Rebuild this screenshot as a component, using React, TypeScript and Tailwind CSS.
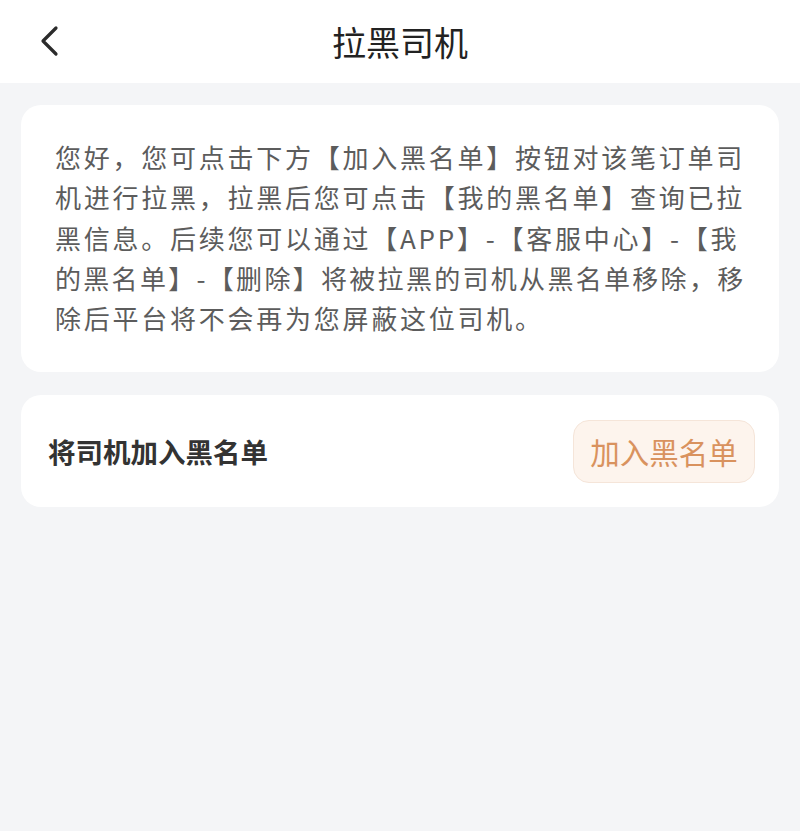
import React from "react";

const lines = [
  "您好，您可点击下方【加入黑名单】按钮对该笔订单司",
  "机进行拉黑，拉黑后您可点击【我的黑名单】查询已拉",
  "黑信息。后续您可以通过【APP】-【客服中心】-【我",
  "的黑名单】-【删除】将被拉黑的司机从黑名单移除，移",
  "除后平台将不会再为您屏蔽这位司机。",
];

export default function App() {
  return (
    <div
      className="min-h-[831px] w-[800px] bg-[#f4f5f7]"
      style={{ fontFamily: '"Noto Sans CJK SC", "Noto Sans", sans-serif' }}
    >
      <div className="relative flex h-[83px] items-center justify-center bg-white">
        <svg
          className="absolute left-[36px] top-[24px]"
          width="26"
          height="34"
          viewBox="0 0 26 34"
          fill="none"
        >
          <path
            d="M20 4 L7 17 L20 30"
            stroke="#2b2b2b"
            strokeWidth="3.2"
            strokeLinecap="round"
            strokeLinejoin="round"
          />
        </svg>
        <span className="text-[34px] leading-none text-[#222]">拉黑司机</span>
      </div>

      <div className="px-[21px] pt-[22px]">
        <div className="rounded-[20px] bg-white pb-[34px] pl-[34px] pr-[20px] pt-[32px] text-[26px] leading-[40.3px] tracking-[2.75px] text-[#5c5c5c]">
          {lines.map((l, i) => (
            <div key={i} className={i === 3 ? "whitespace-nowrap tracking-[2.3px]" : "whitespace-nowrap"}>
              {l}
            </div>
          ))}
        </div>

        <div className="mt-[23px] flex h-[112px] items-center justify-between rounded-[20px] bg-white pl-[27px] pr-[24px]">
          <span className="text-[27.5px] font-bold leading-none text-[#333]">将司机加入黑名单</span>
          <div className="flex h-[63px] w-[182px] items-center justify-center rounded-[16px] border border-[#f5e5d9] bg-[#fdf4ed] text-[29.5px] leading-none text-[#d9925e]">
            加入黑名单
          </div>
        </div>
      </div>
    </div>
  );
}
